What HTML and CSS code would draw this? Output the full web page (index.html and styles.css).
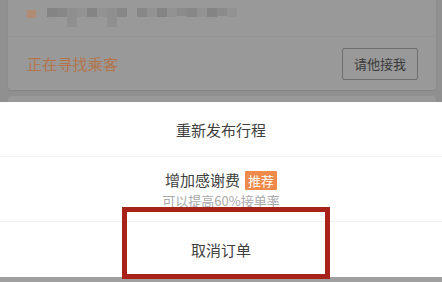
FILE: index.html
```html
<!DOCTYPE html>
<html lang="zh">
<head>
<meta charset="utf-8">
<link rel="stylesheet" href="styles.css">
</head>
<body>
<div class="screen">
  <div class="backdrop">
    <div class="card">
      <div class="info-row">
        <span class="dot"></span>
        <div class="blur">
          <span class="b b1"></span><span class="b b3"></span><span class="b b2"></span><span class="b b4"></span><span class="b b1"></span><span class="b b4"></span><span class="b b2"></span><span class="b b3"></span>
          <span class="gap"></span>
          <span class="b b3"></span><span class="b b4"></span><span class="b b1"></span><span class="b b4"></span><span class="b b5"></span><span class="b b3"></span><span class="b b4"></span><span class="b b1"></span><span class="b b5"></span><span class="b b4"></span>
        </div>
      </div>
      <div class="status-row">
        <span class="status">正在寻找乘客</span>
        <span class="btn">请他接我</span>
      </div>
    </div>
    <div class="card next"></div>
  </div>
  <div class="sheet">
    <div class="row r1">重新发布行程</div>
    <div class="row r2">
      <div class="title">增加感谢费<span class="badge">推荐</span></div>
      <div class="sub">可以提高60%接单率</div>
    </div>
    <div class="row r3">取消订单</div>
  </div>
  <div class="foot"></div>
  <div class="mark"></div>
</div>
</body>
</html>
```
FILE: styles.css
```css
* { box-sizing: border-box; }
html, body { margin: 0; padding: 0; }
body {
  width: 442px;
  height: 282px;
  overflow: hidden;
  font-family: "Noto Sans CJK SC", "Noto Sans", sans-serif;
  background: #fff;
}
.screen {
  position: relative;
  width: 442px;
  height: 282px;
  display: flex;
  flex-direction: column;
}
.backdrop {
  height: 102px;
  background: #909090;
  padding: 0 6px 0 8px;
  display: flex;
  flex-direction: column;
  gap: 6px;
  overflow: hidden;
}
.card {
  background: #999;
  border-radius: 0 0 3px 3px;
  box-shadow: 0 1px 1px rgba(0,0,0,0.08);
}
.card.next {
  height: 20px;
  border-radius: 3px 3px 0 0;
}
.info-row {
  height: 37px;
  display: flex;
  align-items: flex-start;
  padding: 7px 0 0 19px;
  border-bottom: 1px solid #949494;
}
.dot {
  width: 9px;
  height: 8px;
  background: #b08c72;
  margin-top: 3px;
  margin-right: 11px;
}
.blur {
  display: flex;
  height: 20px;
  align-items: flex-start;
}
.b {
  display: block;
  width: 10px;
  height: 9px;
  margin-top: 1px;
  background: #8a8a8a;
}
.b1 { background: #848484; }
.b2 { background: #8f8f8f; height: 19px; }
.b3 { background: #878787; }
.b4 { background: #929292; }
.b5 { background: #8b8b8b; height: 8px; }
.gap { width: 10px; }
.status-row {
  height: 53px;
  display: flex;
  align-items: center;
  justify-content: space-between;
  padding: 0 18px 0 19px;
}
.status {
  color: #b5744a;
  font-size: 15px;
  letter-spacing: 0.2px;
}
.btn {
  width: 76px;
  height: 32px;
  border: 1px solid #6e6e6e;
  border-radius: 2px;
  display: flex;
  align-items: center;
  justify-content: center;
  color: #3a3a3a;
  font-size: 13px;
}
.sheet {
  background: #fff;
  display: flex;
  flex-direction: column;
}
.row {
  display: flex;
  flex-direction: column;
  align-items: center;
  justify-content: center;
  color: #404040;
  font-size: 15px;
}
.r1 { height: 55px; border-bottom: 1px solid #f1f1f1; }
.r2 { height: 65px; border-bottom: 1px solid #f1f1f1; padding-top: 2px; }
.r3 { height: 55px; }
.title {
  display: flex;
  align-items: center;
  line-height: 20px;
}
.badge {
  margin-left: 5px;
  background: #f08a4b;
  color: #fff;
  font-size: 13px;
  line-height: 19px;
  padding: 0 3px;
  border-radius: 1px;
}
.sub {
  color: #a9a9a9;
  font-size: 13px;
  line-height: 18px;
  margin-top: 2px;
}
.foot {
  flex: 1;
  background: #a0a0a0;
}
.mark {
  position: absolute;
  left: 122px;
  top: 207px;
  width: 208px;
  height: 72px;
  border: 5px solid #a8221a;
}
```
